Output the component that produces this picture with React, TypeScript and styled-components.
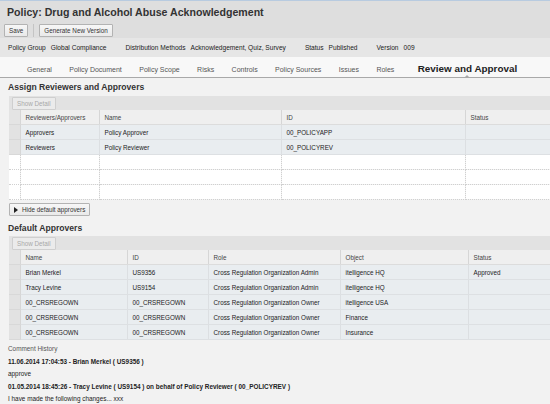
import React from "react";
import styled, { createGlobalStyle } from "styled-components";

const GlobalStyle = createGlobalStyle`
  body {
    margin: 0;
    background: #f2f2f2;
    font-family: "Liberation Sans", Arial, sans-serif;
    color: #333;
    overflow: hidden;
  }
`;

const Header = styled.div`
  background: #dedede;
  border-top: 1px solid #b8cbe0;
`;

const Title = styled.h1`
  margin: 0;
  height: 21px;
  line-height: 22px;
  padding-left: 7px;
  font-size: 10.6px;
  font-weight: bold;
  color: #333;
`;

const Toolbar = styled.div`
  display: flex;
  align-items: center;
  height: 16px;
  padding-left: 4px;
  gap: 5px;
`;

const Button = styled.button<{ $disabled?: boolean }>`
  height: 13px;
  padding: 0 4px;
  margin: 0;
  border: 1px solid ${(p) => (p.$disabled ? "#cfcfcf" : "#b3b3b3")};
  background: ${(p) => (p.$disabled ? "#ebebeb" : "linear-gradient(#f7f7f7, #e9e9e9)")};
  color: ${(p) => (p.$disabled ? "#a8a8a8" : "#333")};
  font-family: inherit;
  font-size: 6.3px;
  line-height: 11px;
  display: flex;
  align-items: center;
  gap: 4px;
  border-radius: 1px;
`;

const Separator = styled.span`
  width: 1px;
  height: 13px;
  background: #c4c4c4;
`;

const InfoBar = styled.div`
  display: flex;
  align-items: center;
  height: 19px;
  padding-left: 8px;
  background: #e6e6e6;
  font-size: 6.6px;
  color: #222;
`;

const InfoGroup = styled.span`
  display: flex;
  gap: 5px;
  margin-right: 19px;
`;

const Tabs = styled.div`
  display: flex;
  align-items: baseline;
  height: 21px;
  box-sizing: border-box;
  padding: 6px 0 0 27px;
  gap: 17.4px;
  background: #f8f8f8;
  border-bottom: 1px solid #a9a9a9;
`;

const Tab = styled.span<{ $active?: boolean }>`
  position: relative;
  font-size: ${(p) => (p.$active ? "9.9px" : "7px")};
  font-weight: ${(p) => (p.$active ? "bold" : "normal")};
  color: ${(p) => (p.$active ? "#222" : "#555")};
  margin-left: ${(p) => (p.$active ? "6px" : "0")};
  line-height: 12px;

  &::after {
    content: "";
    display: ${(p) => (p.$active ? "block" : "none")};
    position: absolute;
    left: 50%;
    top: 12px;
    margin-left: -3px;
    border-left: 3px solid transparent;
    border-right: 3px solid transparent;
    border-bottom: 3px solid #a9a9a9;
  }
`;

const SectionTitle = styled.h2<{ $h: number }>`
  margin: 0;
  height: ${(p) => p.$h}px;
  line-height: ${(p) => p.$h + 1}px;
  padding-left: 8px;
  font-size: 8.6px;
  font-weight: bold;
  color: #333;
`;

const GridWrap = styled.div`
  margin-left: 9px;
  overflow: hidden;
`;

const GridToolbar = styled.div`
  height: 14px;
  display: flex;
  align-items: center;
  padding-left: 3px;
  background: #e2e2e2;
`;

const Table = styled.table`
  border-collapse: collapse;
  table-layout: fixed;
  width: 541px;
  font-size: 6.3px;
`;

const Th = styled.th`
  height: 14px;
  padding: 0 0 0 5px;
  text-align: left;
  font-weight: normal;
  color: #444;
  background: #efefef;
  border-right: 1px solid #d6d6d6;
  border-bottom: 1px solid #dcdcdc;
  white-space: nowrap;
  overflow: hidden;
`;

const Td = styled.td<{ $filled?: boolean }>`
  height: 14px;
  padding: 0 0 0 5px;
  color: #222;
  background: ${(p) => (p.$filled ? "#e9edf0" : "#ffffff")};
  border-right: 1px ${(p) => (p.$filled ? "solid #dcdfe2" : "dotted #d0d0d0")};
  border-bottom: 1px ${(p) => (p.$filled ? "solid #dde0e3" : "dotted #d0d0d0")};
  white-space: nowrap;
  overflow: hidden;
`;

const Sel = styled.td<{ $kind: "head" | "filled" | "empty" }>`
  padding: 0;
  background: ${(p) => (p.$kind === "empty" ? "#ffffff" : p.$kind === "head" ? "#e4e4e4" : "#e2e2e2")};
  border-right: 1px ${(p) => (p.$kind === "empty" ? "dotted #d0d0d0" : "solid #d6d6d6")};
  border-bottom: 1px ${(p) => (p.$kind === "empty" ? "dotted #d0d0d0" : "solid #d8d8d8")};
`;

const HideRow = styled.div`
  height: 19px;
  padding: 0 0 1px 9px;
  display: flex;
  align-items: center;
`;

const Arrow = styled.span`
  width: 0;
  height: 0;
  border-top: 3px solid transparent;
  border-bottom: 3px solid transparent;
  border-left: 4px solid #222;
`;

const Comments = styled.div`
  padding: 3px 0 0 8px;
  font-size: 6.4px;
  line-height: 12.5px;
  color: #222;
`;

const CommentLabel = styled.div`
  color: #555;
`;

const CommentHead = styled.div`
  font-weight: bold;
`;

type Row = string[] | null;

function Grid({ widths, headers, rows }: { widths: number[]; headers: string[]; rows: Row[] }) {
  return (
    <GridWrap>
      <GridToolbar>
        <Button $disabled>Show Detail</Button>
      </GridToolbar>
      <Table>
        <colgroup>
          <col style={{ width: 11 }} />
          {widths.map((w, i) => (
            <col key={i} style={{ width: w }} />
          ))}
        </colgroup>
        <thead>
          <tr>
            <Sel as="th" $kind="head" />
            {headers.map((h) => (
              <Th key={h}>{h}</Th>
            ))}
          </tr>
        </thead>
        <tbody>
          {rows.map((r, i) => (
            <tr key={i}>
              <Sel $kind={r ? "filled" : "empty"} />
              {headers.map((_, j) => (
                <Td key={j} $filled={!!r}>
                  {r ? r[j] : ""}
                </Td>
              ))}
            </tr>
          ))}
        </tbody>
      </Table>
    </GridWrap>
  );
}

const tabs = ["General", "Policy Document", "Policy Scope", "Risks", "Controls", "Policy Sources", "Issues", "Roles"];

export default function App() {
  return (
    <>
      <GlobalStyle />
      <Header>
        <Title>Policy: Drug and Alcohol Abuse Acknowledgement</Title>
        <Toolbar>
          <Button>Save</Button>
          <Separator />
          <Button>Generate New Version</Button>
        </Toolbar>
      </Header>
      <InfoBar>
        <InfoGroup>
          <span>Policy Group</span>
          <span>Global Compliance</span>
        </InfoGroup>
        <InfoGroup>
          <span>Distribution Methods</span>
          <span>Acknowledgement, Quiz, Survey</span>
        </InfoGroup>
        <InfoGroup>
          <span>Status</span>
          <span>Published</span>
        </InfoGroup>
        <InfoGroup>
          <span>Version</span>
          <span>009</span>
        </InfoGroup>
      </InfoBar>
      <Tabs>
        {tabs.map((t) => (
          <Tab key={t}>{t}</Tab>
        ))}
        <Tab $active>Review and Approval</Tab>
      </Tabs>

      <SectionTitle $h={18}>Assign Reviewers and Approvers</SectionTitle>
      <Grid
        widths={[79, 182, 184, 85]}
        headers={["Reviewers/Approvers", "Name", "ID", "Status"]}
        rows={[
          ["Approvers", "Policy Approver", "00_POLICYAPP", ""],
          ["Reviewers", "Policy Reviewer", "00_POLICYREV", ""],
          null,
          null,
          null,
        ]}
      />
      <HideRow>
        <Button>
          <Arrow />
          Hide default approvers
        </Button>
      </HideRow>

      <SectionTitle $h={16}>Default Approvers</SectionTitle>
      <Grid
        widths={[107, 81, 132, 128, 82]}
        headers={["Name", "ID", "Role", "Object", "Status"]}
        rows={[
          ["Brian Merkel", "US9356", "Cross Regulation Organization Admin", "itelligence HQ", "Approved"],
          ["Tracy Levine", "US9154", "Cross Regulation Organization Admin", "itelligence HQ", ""],
          ["00_CRSREGOWN", "00_CRSREGOWN", "Cross Regulation Organization Owner", "itelligence USA", ""],
          ["00_CRSREGOWN", "00_CRSREGOWN", "Cross Regulation Organization Owner", "Finance", ""],
          ["00_CRSREGOWN", "00_CRSREGOWN", "Cross Regulation Organization Owner", "Insurance", ""],
        ]}
      />

      <Comments>
        <CommentLabel>Comment History</CommentLabel>
        <CommentHead>11.06.2014 17:04:53 - Brian Merkel ( US9356 )</CommentHead>
        <div>approve</div>
        <CommentHead>
          01.05.2014 18:45:26 - Tracy Levine ( US9154 ) on behalf of Policy Reviewer ( 00_POLICYREV )
        </CommentHead>
        <div>I have made the following changes... xxx</div>
      </Comments>
    </>
  );
}
